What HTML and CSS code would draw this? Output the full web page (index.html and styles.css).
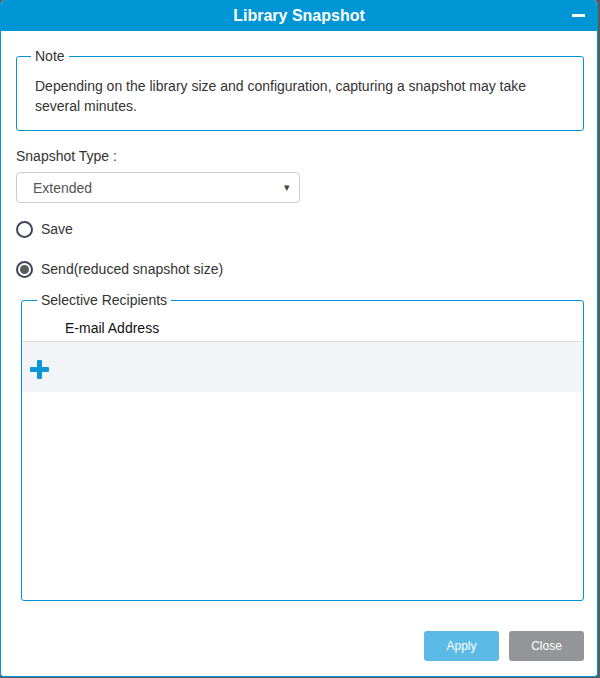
FILE: index.html
```html
<!DOCTYPE html>
<html>
<head>
	<meta charset="UTF-8">
	<title>Library Snapshot</title>
	<link rel="stylesheet" href="styles.css">
</head>
<body>
<div class="window">
	<div class="titlebar">
		<span class="title">Library Snapshot</span>
		<span class="minimize"></span>
	</div>
	<div class="content">
		<fieldset class="note">
			<legend>Note</legend>
			<p>Depending on the library size and configuration, capturing a snapshot may take several minutes.</p>
		</fieldset>

		<div class="field-label">Snapshot Type :</div>
		<div class="select">
			<span>Extended</span>
			<span class="arrow">&#9662;</span>
		</div>

		<label class="radio">
			<span class="circle"></span>
			Save
		</label>
		<label class="radio checked">
			<span class="circle"></span>
			Send(reduced snapshot size)
		</label>

		<fieldset class="recipients">
			<legend>Selective Recipients</legend>
			<div class="grid-head">E-mail Address</div>
			<div class="grid-row">
				<svg class="plus" width="19" height="19" viewBox="0 0 19 19">
					<rect x="7" y="0" width="5" height="19" rx="1" fill="#0e97d6"/>
					<rect x="0" y="7" width="19" height="5" rx="1" fill="#0e97d6"/>
				</svg>
			</div>
		</fieldset>

		<div class="buttons">
			<button class="apply">Apply</button>
			<button class="close">Close</button>
		</div>
	</div>
</div>
</body>
</html>
```

FILE: styles.css
```css
body {
	margin: 0;
	background-color: #5a5a5a;
	font-family: "Liberation Sans", Arial, sans-serif;
	font-size: 14px;
	color: #333;
}
.window {
	width: 598px;
	height: 677px;
	box-sizing: border-box;
	background-color: #FFF;
	border: 1px solid #0096d6;
	border-top: none;
	border-radius: 5px 5px 4px 4px;
	overflow: hidden;
	display: flex;
	flex-direction: column;
}
.titlebar {
	position: relative;
	height: 31px;
	background-color: #0096d6;
	display: flex;
	align-items: center;
	justify-content: center;
	margin: 0 -1px;
}
.title {
	color: #FFF;
	font-weight: bold;
	font-size: 16px;
}
.minimize {
	position: absolute;
	right: 13px;
	top: 14px;
	width: 13px;
	height: 3px;
	background-color: #FFF;
}
.content {
	flex: 1;
	display: flex;
	flex-direction: column;
	padding: 17px 13px 15px 15px;
}
fieldset {
	margin: 0;
	min-width: 0;
	border: 1px solid #0096d6;
	border-radius: 3px;
}
legend {
	padding: 0 4px;
	line-height: 16px;
}
.note {
	padding: 12px 18px 14px 18px;
}
.note legend {
	margin-left: -4px;
}
.note p {
	margin: 0;
	line-height: 20px;
}
.field-label {
	margin-top: 15px;
	line-height: 20px;
}
.select {
	margin-top: 6px;
	width: 284px;
	height: 31px;
	box-sizing: border-box;
	border: 1px solid #ccc;
	border-radius: 4px;
	display: flex;
	align-items: center;
	justify-content: space-between;
	padding: 0 9px 0 16px;
	color: #555;
}
.select .arrow {
	font-size: 11px;
	color: #444;
}
.radio {
	display: flex;
	align-items: center;
	gap: 8px;
	height: 20px;
	margin-top: 20px;
}
.radio:first-of-type {
	margin-top: 16px;
}
.circle {
	width: 17px;
	height: 17px;
	box-sizing: border-box;
	border: 2px solid #3b4853;
	border-radius: 50%;
	display: inline-flex;
	align-items: center;
	justify-content: center;
}
.checked .circle::after {
	content: "";
	width: 9px;
	height: 9px;
	border-radius: 50%;
	background-color: #5a5a5a;
}
.recipients {
	margin: 13px 0 0 5px;
	padding: 0;
	height: 309px;
	box-sizing: border-box;
}
.recipients legend {
	margin-left: 15px;
}
.grid-head {
	padding: 10px 0 3px 43px;
	line-height: 20px;
	color: #111;
	border-bottom: 1px solid #ddd;
}
.grid-row {
	height: 50px;
	box-sizing: border-box;
	padding: 4px 0 0 8px;
	background-color: #f2f4f8;
	display: flex;
	align-items: center;
}
.buttons {
	margin-top: auto;
	display: flex;
	justify-content: flex-end;
	gap: 10px;
}
button {
	width: 75px;
	height: 30px;
	border: none;
	border-radius: 3px;
	color: #FFF;
	font-family: "Liberation Sans", Arial, sans-serif;
	font-size: 12px;
}
.apply {
	background-color: #5cbae6;
}
.close {
	background-color: #939598;
}
```
